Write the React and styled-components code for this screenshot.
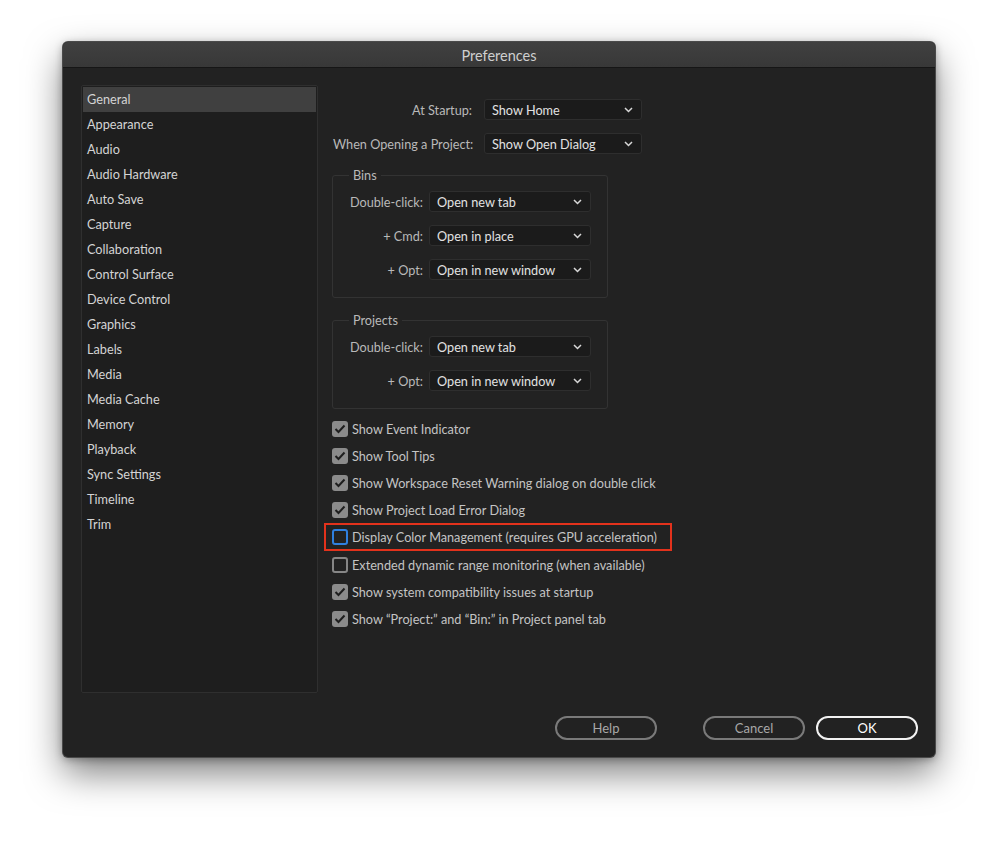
import React from "react";
import styled, { createGlobalStyle, css } from "styled-components";

const Global = createGlobalStyle`
  html, body { margin: 0; padding: 0; background: #ffffff; }
  body { font-family: Lato, "Liberation Sans", sans-serif; -webkit-font-smoothing: antialiased; }
  * { box-sizing: border-box; }
`;

const Page = styled.div`
  width: 999px;
  height: 841px;
  padding: 42px 0 0 63px;
  background: #ffffff;
`;

const Window = styled.div`
  width: 872px;
  height: 715px;
  background: #222222;
  border-radius: 5px;
  box-shadow: 0 0 0 1px #4a4a4a, 0 16px 36px rgba(0, 0, 0, 0.5), 0 2px 8px rgba(0, 0, 0, 0.35);
  display: flex;
  flex-direction: column;
  overflow: hidden;
`;

const TitleBar = styled.div`
  height: 26px;
  padding-top: 1px;
  background: linear-gradient(#404040, #383838);
  border-bottom: 1px solid #161616;
  display: flex;
  align-items: center;
  justify-content: center;
  color: #cfcfcf;
  font-size: 14.5px;
`;

const Body = styled.div`
  flex: 1;
  display: flex;
  flex-direction: column;
  padding: 17px 17px 17px 18px;
`;

const Main = styled.div`
  display: flex;
  gap: 14px;
  height: 608px;
`;

const Sidebar = styled.div`
  width: 237px;
  height: 100%;
  background: #1e1e1e;
  border: 1px solid #2f2f2f;
  border-radius: 2px;
  padding: 1px;
  display: flex;
  flex-direction: column;
`;

const NavItem = styled.div`
  height: 25px;
  display: flex;
  align-items: center;
  padding-left: 4px;
  padding-bottom: 1px;
  font-size: 12.7px;
  color: #d4d4d4;
  ${(p) => p.$active && css`background: #404040;`}
`;

const Content = styled.div`
  flex: 1;
  display: flex;
  flex-direction: column;
  padding-top: 14px;
`;

const TopGrid = styled.div`
  display: grid;
  grid-template-columns: 139px 158px;
  column-gap: 12px;
  row-gap: 13px;
  align-items: center;
  margin-left: 1px;
`;

const Label = styled.div`
  text-align: right;
  font-size: 12.7px;
  color: #b9b9b9;
  white-space: nowrap;
`;

const Select = styled.div`
  height: 21px;
  background: #1b1b1b;
  border: 1px solid #2e2e2e;
  border-radius: 3px;
  display: flex;
  align-items: center;
  justify-content: space-between;
  padding: 0 8px 0 7px;
  font-size: 12.7px;
  color: #e2e2e2;
`;

const Group = styled.fieldset`
  margin: 0;
  width: 276px;
  border: 1px solid #333333;
  border-radius: 3px;
  padding: 8px 16px 17px 10px;
  margin-top: ${(p) => p.$top}px;
`;

const Legend = styled.legend`
  font-size: 12.7px;
  color: #b9b9b9;
  padding: 0 4px;
  margin-left: 6px;
  line-height: 16px;
`;

const GroupGrid = styled.div`
  display: grid;
  grid-template-columns: 80px 162px;
  column-gap: 6px;
  row-gap: 13px;
  align-items: center;
`;

const Checks = styled.div`
  display: flex;
  flex-direction: column;
  margin-top: 6px;
`;

const CheckRow = styled.div`
  height: 27px;
  display: flex;
  align-items: center;
  gap: 4px;
  font-size: 12.7px;
  color: #c4c4c4;
  white-space: nowrap;
  ${(p) =>
    p.$highlight &&
    css`
      align-self: flex-start;
      height: 28px;
      margin: 0 0 0 -8px;
      padding: 0 13px 0 6px;
      border: 2px solid #e3321c;
    `}
`;

const Box = styled.div`
  width: 16px;
  height: 16px;
  border-radius: 3px;
  flex: none;
  display: flex;
  align-items: center;
  justify-content: center;
  ${(p) =>
    p.$checked
      ? css`background: #8b8b8b;`
      : css`border: 2px solid ${p.$focus ? "#2f80e0" : "#868686"}; background: #222;`}
`;

const Footer = styled.div`
  display: flex;
  justify-content: flex-end;
  align-items: center;
  margin-top: 23px;
  gap: 11px;
`;

const Button = styled.div`
  width: 102px;
  height: 24px;
  border-radius: 12px;
  border: 2px solid ${(p) => (p.$primary ? "#f2f2f2" : "#7a7a7a")};
  color: ${(p) => (p.$primary ? "#ffffff" : "#a8a8a8")};
  display: flex;
  align-items: center;
  justify-content: center;
  font-size: 13px;
  margin-right: ${(p) => p.$gapRight || 0}px;
`;

const Chevron = () => (
  <svg width="9" height="6" viewBox="0 0 9 6">
    <path d="M1 1 L4.5 4.5 L8 1" fill="none" stroke="#d8d8d8" strokeWidth="1.5" />
  </svg>
);

const Tick = () => (
  <svg width="12" height="10" viewBox="0 0 12 10">
    <path d="M1.5 5 L4.5 8 L10.5 1.5" fill="none" stroke="#1e1e1e" strokeWidth="2" />
  </svg>
);

const nav = [
  "General", "Appearance", "Audio", "Audio Hardware", "Auto Save", "Capture",
  "Collaboration", "Control Surface", "Device Control", "Graphics", "Labels",
  "Media", "Media Cache", "Memory", "Playback", "Sync Settings", "Timeline", "Trim",
];

const checks = [
  { t: "Show Event Indicator", c: true },
  { t: "Show Tool Tips", c: true },
  { t: "Show Workspace Reset Warning dialog on double click", c: true },
  { t: "Show Project Load Error Dialog", c: true },
  { t: "Display Color Management (requires GPU acceleration)", c: false, h: true },
  { t: "Extended dynamic range monitoring (when available)", c: false },
  { t: "Show system compatibility issues at startup", c: true },
  { t: "Show \u201CProject:\u201D and \u201CBin:\u201D in Project panel tab", c: true },
];

const SelectBox = ({ children }) => (
  <Select>
    <span>{children}</span>
    <Chevron />
  </Select>
);

export default function App() {
  return (
    <Page>
      <Global />
      <Window>
        <TitleBar>Preferences</TitleBar>
        <Body>
          <Main>
            <Sidebar>
              {nav.map((n, i) => (
                <NavItem key={n} $active={i === 0}>{n}</NavItem>
              ))}
            </Sidebar>
            <Content>
              <TopGrid>
                <Label>At Startup:</Label>
                <SelectBox>Show Home</SelectBox>
                <Label>When Opening a Project:</Label>
                <SelectBox>Show Open Dialog</SelectBox>
              </TopGrid>
              <Group $top={13}>
                <Legend>Bins</Legend>
                <GroupGrid>
                  <Label>Double-click:</Label>
                  <SelectBox>Open new tab</SelectBox>
                  <Label>+ Cmd:</Label>
                  <SelectBox>Open in place</SelectBox>
                  <Label>+ Opt:</Label>
                  <SelectBox>Open in new window</SelectBox>
                </GroupGrid>
              </Group>
              <Group $top={14}>
                <Legend>Projects</Legend>
                <GroupGrid>
                  <Label>Double-click:</Label>
                  <SelectBox>Open new tab</SelectBox>
                  <Label>+ Opt:</Label>
                  <SelectBox>Open in new window</SelectBox>
                </GroupGrid>
              </Group>
              <Checks>
                {checks.map((c) => (
                  <CheckRow key={c.t} $highlight={c.h}>
                    <Box $checked={c.c} $focus={c.h}>{c.c && <Tick />}</Box>
                    <span>{c.t}</span>
                  </CheckRow>
                ))}
              </Checks>
            </Content>
          </Main>
          <Footer>
            <Button $gapRight={35}>Help</Button>
            <Button>Cancel</Button>
            <Button $primary>OK</Button>
          </Footer>
        </Body>
      </Window>
    </Page>
  );
}
